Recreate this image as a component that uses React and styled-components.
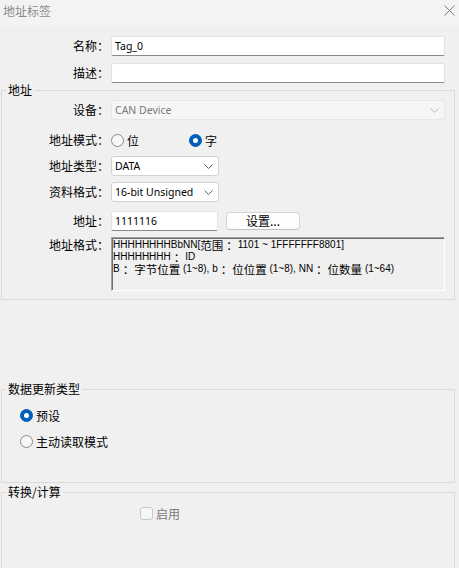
import React from 'react';
import styled, { createGlobalStyle } from 'styled-components';

const Global = createGlobalStyle`
  html, body { margin: 0; padding: 0; background: #f0f0f0; }
  body {
    font-family: "Noto Sans CJK SC", "Noto Sans", sans-serif;
    font-size: 12px;
    color: #000;
  }
  #root { width: 459px; height: 568px; overflow: hidden; }
`;

const Window = styled.div`
  width: 459px;
  height: 568px;
  display: flex;
  flex-direction: column;
  background: #f0f0f0;
  overflow: hidden;
`;

const TitleBar = styled.div`
  height: 26px;
  flex: none;
  display: flex;
  align-items: flex-start;
  justify-content: space-between;
  padding: 4px 4px 0 3px;
  box-sizing: border-box;
  background: #f3f3f3;
`;

const Title = styled.span`
  color: #8a8a8a;
  font-size: 12px;
  line-height: 14px;
`;

const CloseButton = styled.button`
  border: 0;
  background: transparent;
  padding: 0;
  margin-top: 1px;
  width: 11px;
  height: 11px;
  display: flex;
`;

const Body = styled.div`
  flex: 1;
  display: flex;
  flex-direction: column;
  padding: 10px 4px 0 1px;
`;

const Row = styled.div`
  display: flex;
  align-items: ${p => (p.$top ? 'flex-start' : 'center')};
  min-height: 20px;
  margin-top: ${p => p.$mt || 0}px;
  padding-left: ${p => p.$indent || 0}px;
`;

const Label = styled.label`
  flex: none;
  width: ${p => p.$w}px;
  text-align: right;
  white-space: nowrap;
  line-height: ${p => p.$lh || 20}px;
  margin-right: 2px;
`;

const TextBox = styled.input`
  box-sizing: border-box;
  width: ${p => p.$w}px;
  height: 20px;
  margin: 0;
  padding: 0 3px;
  background: #fff;
  border: 1px solid #e3e3e3;
  border-bottom-color: #8a8a8a;
  border-radius: 2px;
  font-family: "Noto Sans", "Noto Sans CJK SC", sans-serif;
  font-size: 10.5px;
  color: #000;
  outline: none;
`;

const Select = styled.div`
  box-sizing: border-box;
  width: ${p => p.$w}px;
  height: 20px;
  display: flex;
  align-items: center;
  justify-content: space-between;
  padding: 0 5px 0 3px;
  background: ${p => (p.$disabled ? '#f6f6f6' : '#fff')};
  border: 1px solid ${p => (p.$disabled ? '#e6e6e6' : '#d2d2d2')};
  border-radius: 3px;
  font-family: "Noto Sans", "Noto Sans CJK SC", sans-serif;
  font-size: 10.5px;
  color: ${p => (p.$disabled ? '#7a7a7a' : '#000')};
`;

const Chevron = ({ color }) => (
  <svg width="9" height="5" viewBox="0 0 9 5">
    <path d="M0.5 0.5 L4.5 4.5 L8.5 0.5" fill="none" stroke={color} strokeWidth="1" />
  </svg>
);

const Button = styled.button`
  box-sizing: border-box;
  width: 74px;
  height: 18px;
  margin: 0 0 0 8px;
  padding: 0;
  background: #fdfdfd;
  border: 1px solid #d4d4d4;
  border-bottom-color: #c2c2c2;
  border-radius: 4px;
  font-family: "Noto Sans CJK SC", sans-serif;
  font-size: 12px;
  line-height: 16px;
  color: #000;
`;

const Group = styled.fieldset`
  margin: ${p => p.$mt || 0}px 0 0 0;
  padding: ${p => p.$pad};
  border: 1px solid #dadada;
  min-width: 0;
  min-height: ${p => p.$minH || 0}px;
`;

const Legend = styled.legend`
  padding: 0 2px;
  margin-left: 4px;
  font-size: 12px;
  line-height: 14px;
`;

const RadioRow = styled.label`
  display: inline-flex;
  align-items: center;
  height: 20px;
  margin-left: ${p => p.$ml || 0}px;
  gap: 3px;
`;

const RadioDot = styled.span`
  box-sizing: border-box;
  width: 13px;
  height: 13px;
  border-radius: 50%;
  position: relative;
  background: ${p => (p.$on ? '#005fb8' : '#f7f7f7')};
  border: 1px solid ${p => (p.$on ? '#005fb8' : '#8a8a8a')};
  &::after {
    content: '';
    display: ${p => (p.$on ? 'block' : 'none')};
    position: absolute;
    left: 3px;
    top: 3px;
    width: 5px;
    height: 5px;
    border-radius: 50%;
    background: #fff;
  }
`;

const CheckRow = styled.label`
  display: inline-flex;
  align-items: center;
  height: 20px;
  margin-left: ${p => p.$ml || 0}px;
  gap: 3px;
  color: ${p => (p.$disabled ? '#7a7a7a' : '#000')};
`;

const CheckBox = styled.span`
  box-sizing: border-box;
  width: 13px;
  height: 13px;
  border-radius: 3px;
  background: #f7f7f7;
  border: 1px solid #c8c8c8;
`;

const FormatBox = styled.div`
  box-sizing: border-box;
  width: 335px;
  height: 54px;
  padding: 1px 0 0 1px;
  background: #f0f0f0;
  border-style: solid;
  border-width: 1px;
  border-color: #a0a0a0 #ffffff #ffffff #a0a0a0;
  box-shadow: inset 1px 1px 0 #6f6f6f;
  font-family: "Liberation Sans", "Noto Sans CJK SC", sans-serif;
  font-size: 10px;
  line-height: 12px;
  white-space: nowrap;
`;

const FormatLine = styled.div`
  height: 12px;
  line-height: 12px;
`;

/* Han runs in the hint box are set a size larger than the Latin text */
const Han = styled.span`
  display: inline-block;
  vertical-align: top;
  font-family: "Noto Sans CJK SC", sans-serif;
  font-size: 11.5px;
  line-height: 12px;
`;

/* full-width colon with a little air on its left */
const Colon = styled(Han)`
  padding-left: 3px;
`;

export default function App() {
  return (
    <Window>
      <Global />
      <TitleBar>
        <Title>地址标签</Title>
        <CloseButton aria-label="关闭">
          <svg width="11" height="11" viewBox="0 0 11 11">
            <path d="M0.5 0.5 L10.5 10.5 M10.5 0.5 L0.5 10.5" stroke="#7a7a7a" strokeWidth="1" />
          </svg>
        </CloseButton>
      </TitleBar>

      <Body>
        <Row>
          <Label $w={108}>名称：</Label>
          <TextBox $w={334} defaultValue="Tag_0" readOnly />
        </Row>
        <Row $mt={7}>
          <Label $w={108}>描述：</Label>
          <TextBox $w={334} defaultValue="" readOnly />
        </Row>

        <Group $pad="3px 9px 8px 0">
          <Legend>地址</Legend>
          <Row>
            <Label $w={107}>设备：</Label>
            <Select $w={334} $disabled>
              <span>CAN Device</span>
              <Chevron color="#b5b5b5" />
            </Select>
          </Row>
          <Row $mt={10}>
            <Label $w={107}>地址模式：</Label>
            <RadioRow>
              <RadioDot />
              <span>位</span>
            </RadioRow>
            <RadioRow $ml={50}>
              <RadioDot $on />
              <span>字</span>
            </RadioRow>
          </Row>
          <Row $mt={6}>
            <Label $w={107}>地址类型：</Label>
            <Select $w={108}>
              <span>DATA</span>
              <Chevron color="#606060" />
            </Select>
          </Row>
          <Row $mt={6}>
            <Label $w={107}>资料格式：</Label>
            <Select $w={108}>
              <span>16-bit Unsigned</span>
              <Chevron color="#606060" />
            </Select>
          </Row>
          <Row $mt={9}>
            <Label $w={107}>地址：</Label>
            <TextBox $w={107} defaultValue="1111116" readOnly />
            <Button>设置...</Button>
          </Row>
          <Row $top $mt={6}>
            <Label $w={107} $lh={16}>地址格式：</Label>
            <FormatBox>
              <FormatLine>
                HHHHHHHHBbNN[<Han>范围</Han><Colon>：</Colon>1101 ~ 1FFFFFFF8801]
              </FormatLine>
              <FormatLine>
                HHHHHHHH<Colon>：</Colon>ID
              </FormatLine>
              <FormatLine>
                B<Colon>：</Colon><Han>字节位置</Han> (1~8), b<Colon>：</Colon><Han>位位置</Han> (1~8), NN<Colon>：</Colon><Han>位数量</Han> (1~64)
              </FormatLine>
            </FormatBox>
          </Row>
        </Group>

        <Group $mt={82} $pad="9px 0 31px 0">
          <Legend>数据更新类型</Legend>
          <Row $indent={18}>
            <RadioRow>
              <RadioDot $on />
              <span>预设</span>
            </RadioRow>
          </Row>
          <Row $mt={6} $indent={18}>
            <RadioRow>
              <RadioDot />
              <span>主动读取模式</span>
            </RadioRow>
          </Row>
        </Group>

        <Group $mt={2} $pad="4px 0 0 0" $minH={140}>
          <Legend>转换/计算</Legend>
          <Row>
            <CheckRow $ml={138} $disabled>
              <CheckBox />
              <span>启用</span>
            </CheckRow>
          </Row>
        </Group>
      </Body>
    </Window>
  );
}
